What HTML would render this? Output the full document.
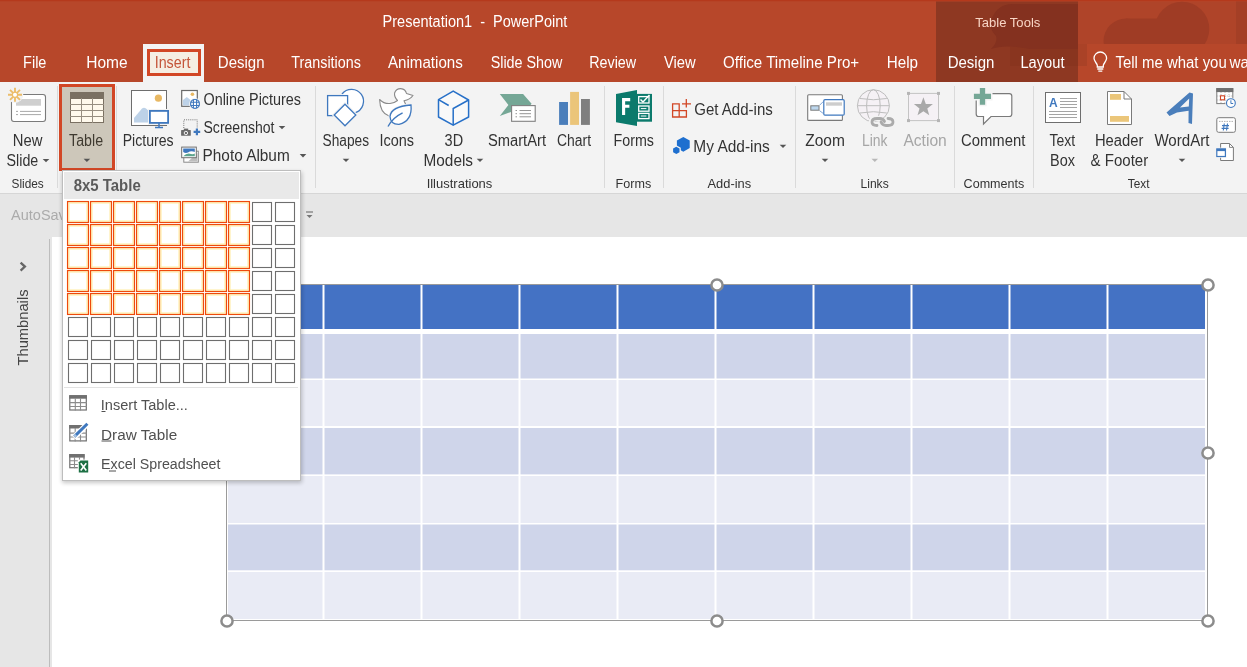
<!DOCTYPE html>
<html><head><meta charset="utf-8"><title>PowerPoint</title>
<style>html,body{margin:0;padding:0;width:1247px;height:667px;overflow:hidden;background:#fff}
svg{display:block;will-change:transform} text{font-family:"Liberation Sans", sans-serif;}</style></head>
<body><svg width="1247" height="667" viewBox="0 0 1247 667">
<rect x="0" y="0" width="1247" height="82" fill="#B7472A"/>
<rect x="0" y="0" width="1247" height="1.2" fill="#B5391C"/>
<rect x="1078" y="1.5" width="169" height="42.5" fill="#AF4429"/>
<g fill="#9F3C25"><circle cx="1182" cy="29" r="27.3"/><circle cx="1126" cy="41" r="22.5"/><rect x="1126" y="18.5" width="40" height="25.5"/></g>
<rect x="1236" y="1.5" width="11" height="42.5" fill="#A43F26"/>
<rect x="936" y="1.5" width="142" height="80.5" fill="#8E3822"/>
<path d="M1010 47 Q1040 43 1078 45 V66 H1010 Z" fill="#89351F"/>
<path d="M1012 4 H1078 V49 H1030 Q1005 44 991 49 Q998 42 996 36 Q988 28 992 18 Q998 4 1012 4 Z" fill="#84311F"/>
<rect x="1078" y="44" width="9" height="22" fill="#AA4227"/>
<rect x="1087" y="44" width="160" height="38" fill="#B7472A"/>
<text x="382.59" y="27" font-size="16" fill="#FFFFFF" font-weight="400" textLength="184.70" lengthAdjust="spacingAndGlyphs" style="white-space:pre">Presentation1  -  PowerPoint</text>
<text x="975.20" y="27" font-size="13.5" fill="#F8D5C5" font-weight="400" textLength="65.16" lengthAdjust="spacingAndGlyphs" >Table Tools</text>
<rect x="143" y="44" width="61" height="38" fill="#F3F3F3"/>
<rect x="148.5" y="50.5" width="51" height="24" fill="#F5EEE3" stroke="#D24726" stroke-width="3"/>
<text x="23.10" y="68" font-size="16" fill="#FFFFFF" font-weight="400" textLength="23.31" lengthAdjust="spacingAndGlyphs" >File</text>
<text x="86.23" y="68" font-size="16" fill="#FFFFFF" font-weight="400" textLength="41.37" lengthAdjust="spacingAndGlyphs" >Home</text>
<text x="154.71" y="68" font-size="16" fill="#C4553A" font-weight="400" textLength="35.70" lengthAdjust="spacingAndGlyphs" >Insert</text>
<text x="217.86" y="68" font-size="16" fill="#FFFFFF" font-weight="400" textLength="46.68" lengthAdjust="spacingAndGlyphs" >Design</text>
<text x="291.30" y="68" font-size="16" fill="#FFFFFF" font-weight="400" textLength="69.60" lengthAdjust="spacingAndGlyphs" >Transitions</text>
<text x="388.00" y="68" font-size="16" fill="#FFFFFF" font-weight="400" textLength="74.80" lengthAdjust="spacingAndGlyphs" >Animations</text>
<text x="490.70" y="68" font-size="16" fill="#FFFFFF" font-weight="400" textLength="71.70" lengthAdjust="spacingAndGlyphs" >Slide Show</text>
<text x="589.20" y="68" font-size="16" fill="#FFFFFF" font-weight="400" textLength="47.00" lengthAdjust="spacingAndGlyphs" >Review</text>
<text x="663.90" y="68" font-size="16" fill="#FFFFFF" font-weight="400" textLength="31.69" lengthAdjust="spacingAndGlyphs" >View</text>
<text x="723.10" y="68" font-size="16" fill="#FFFFFF" font-weight="400" textLength="136.02" lengthAdjust="spacingAndGlyphs" >Office Timeline Pro+</text>
<text x="886.75" y="68" font-size="16" fill="#FFFFFF" font-weight="400" textLength="31.25" lengthAdjust="spacingAndGlyphs" >Help</text>
<text x="947.66" y="68" font-size="16" fill="#FFFFFF" font-weight="400" textLength="46.68" lengthAdjust="spacingAndGlyphs" >Design</text>
<text x="1020.48" y="68" font-size="16" fill="#FFFFFF" font-weight="400" textLength="44.01" lengthAdjust="spacingAndGlyphs" >Layout</text>
<g fill="none" stroke="#FFFFFF" stroke-width="1.3"><path d="M1097.3 67 V65.5 C1097.3 63.5 1094 61.5 1094 58.3 A6.3 6.3 0 0 1 1106.6 58.3 C1106.6 61.5 1103.3 63.5 1103.3 65.5 V67 Z"/><path d="M1097.3 69 H1103.3 M1098.3 71.2 H1102.3"/></g>
<text x="1115.50" y="68" font-size="16" fill="#FFFFFF" font-weight="400" textLength="111.24" lengthAdjust="spacingAndGlyphs" >Tell me what you</text>
<text x="1229.45" y="68" font-size="16" fill="#FFFFFF" font-weight="400" textLength="70.45" lengthAdjust="spacingAndGlyphs" >want to do</text>
<rect x="0" y="82" width="1247" height="111" fill="#F3F3F3"/>
<rect x="0" y="193" width="1247" height="1" fill="#D6D6D6"/>
<rect x="57.0" y="86" width="1" height="102" fill="#DADADA"/>
<rect x="116.0" y="86" width="1" height="102" fill="#DADADA"/>
<rect x="315.0" y="86" width="1" height="102" fill="#DADADA"/>
<rect x="604.0" y="86" width="1" height="102" fill="#DADADA"/>
<rect x="663.0" y="86" width="1" height="102" fill="#DADADA"/>
<rect x="795.0" y="86" width="1" height="102" fill="#DADADA"/>
<rect x="954.0" y="86" width="1" height="102" fill="#DADADA"/>
<rect x="1033.0" y="86" width="1" height="102" fill="#DADADA"/>
<rect x="60.5" y="85.5" width="53" height="84" fill="#CDC7BA" stroke="#D24726" stroke-width="3"/>
<text x="12.87" y="145.8" font-size="16" fill="#333333" font-weight="400" textLength="29.61" lengthAdjust="spacingAndGlyphs" >New</text>
<text x="6.60" y="165.8" font-size="16" fill="#333333" font-weight="400" textLength="31.71" lengthAdjust="spacingAndGlyphs" >Slide</text>
<text x="69.10" y="145.8" font-size="16" fill="#3F3A30" font-weight="400" textLength="34.01" lengthAdjust="spacingAndGlyphs" >Table</text>
<text x="122.72" y="145.8" font-size="16" fill="#333333" font-weight="400" textLength="50.78" lengthAdjust="spacingAndGlyphs" >Pictures</text>
<text x="203.50" y="104.8" font-size="16" fill="#333333" font-weight="400" textLength="97.50" lengthAdjust="spacingAndGlyphs" >Online Pictures</text>
<text x="203.50" y="133.2" font-size="16" fill="#333333" font-weight="400" textLength="71.01" lengthAdjust="spacingAndGlyphs" >Screenshot</text>
<text x="202.55" y="161" font-size="16" fill="#333333" font-weight="400" textLength="87.16" lengthAdjust="spacingAndGlyphs" >Photo Album</text>
<text x="322.50" y="145.8" font-size="16" fill="#333333" font-weight="400" textLength="46.50" lengthAdjust="spacingAndGlyphs" >Shapes</text>
<text x="379.50" y="145.8" font-size="16" fill="#333333" font-weight="400" textLength="34.50" lengthAdjust="spacingAndGlyphs" >Icons</text>
<text x="444.60" y="145.8" font-size="16" fill="#333333" font-weight="400" textLength="18.50" lengthAdjust="spacingAndGlyphs" >3D</text>
<text x="423.54" y="165.8" font-size="16" fill="#333333" font-weight="400" textLength="49.46" lengthAdjust="spacingAndGlyphs" >Models</text>
<text x="488.00" y="145.8" font-size="16" fill="#333333" font-weight="400" textLength="57.99" lengthAdjust="spacingAndGlyphs" >SmartArt</text>
<text x="557.00" y="145.8" font-size="16" fill="#333333" font-weight="400" textLength="34.02" lengthAdjust="spacingAndGlyphs" >Chart</text>
<text x="613.61" y="145.8" font-size="16" fill="#333333" font-weight="400" textLength="40.39" lengthAdjust="spacingAndGlyphs" >Forms</text>
<text x="694.30" y="114.8" font-size="16" fill="#333333" font-weight="400" textLength="78.50" lengthAdjust="spacingAndGlyphs" >Get Add-ins</text>
<text x="693.34" y="152" font-size="16" fill="#333333" font-weight="400" textLength="76.46" lengthAdjust="spacingAndGlyphs" >My Add-ins</text>
<text x="805.20" y="145.8" font-size="16" fill="#333333" font-weight="400" textLength="39.62" lengthAdjust="spacingAndGlyphs" >Zoom</text>
<text x="861.93" y="145.8" font-size="16" fill="#A6A6A6" font-weight="400" textLength="25.50" lengthAdjust="spacingAndGlyphs" >Link</text>
<text x="903.40" y="145.8" font-size="16" fill="#A6A6A6" font-weight="400" textLength="43.38" lengthAdjust="spacingAndGlyphs" >Action</text>
<text x="961.00" y="145.8" font-size="16" fill="#333333" font-weight="400" textLength="64.29" lengthAdjust="spacingAndGlyphs" >Comment</text>
<text x="1049.50" y="145.8" font-size="16" fill="#333333" font-weight="400" textLength="25.62" lengthAdjust="spacingAndGlyphs" >Text</text>
<text x="1050.00" y="165.8" font-size="16" fill="#333333" font-weight="400" textLength="24.90" lengthAdjust="spacingAndGlyphs" >Box</text>
<text x="1094.88" y="145.8" font-size="16" fill="#333333" font-weight="400" textLength="48.50" lengthAdjust="spacingAndGlyphs" >Header</text>
<text x="1090.60" y="165.8" font-size="16" fill="#333333" font-weight="400" textLength="57.57" lengthAdjust="spacingAndGlyphs" >&amp; Footer</text>
<text x="1154.40" y="145.8" font-size="16" fill="#333333" font-weight="400" textLength="55.08" lengthAdjust="spacingAndGlyphs" >WordArt</text>
<text x="11.50" y="187.7" font-size="13.5" fill="#333333" font-weight="400" textLength="32.28" lengthAdjust="spacingAndGlyphs" >Slides</text>
<text x="426.64" y="187.7" font-size="13.5" fill="#333333" font-weight="400" textLength="65.72" lengthAdjust="spacingAndGlyphs" >Illustrations</text>
<text x="615.57" y="187.7" font-size="13.5" fill="#333333" font-weight="400" textLength="35.60" lengthAdjust="spacingAndGlyphs" >Forms</text>
<text x="707.50" y="187.7" font-size="13.5" fill="#333333" font-weight="400" textLength="43.66" lengthAdjust="spacingAndGlyphs" >Add-ins</text>
<text x="860.51" y="187.7" font-size="13.5" fill="#333333" font-weight="400" textLength="28.17" lengthAdjust="spacingAndGlyphs" >Links</text>
<text x="963.60" y="187.7" font-size="13.5" fill="#333333" font-weight="400" textLength="60.67" lengthAdjust="spacingAndGlyphs" >Comments</text>
<text x="1127.80" y="187.7" font-size="13.5" fill="#333333" font-weight="400" textLength="21.68" lengthAdjust="spacingAndGlyphs" >Text</text>
<path d="M42.70 158.9 h6.6 l-3.3 3.3 z" fill="#555555"/>
<path d="M83.60 158.8 h6.6 l-3.3 3.3 z" fill="#555555"/>
<path d="M278.70 125.9 h6.6 l-3.3 3.3 z" fill="#555555"/>
<path d="M299.70 154.1 h6.6 l-3.3 3.3 z" fill="#555555"/>
<path d="M342.70 158.8 h6.6 l-3.3 3.3 z" fill="#555555"/>
<path d="M476.70 158.8 h6.6 l-3.3 3.3 z" fill="#555555"/>
<path d="M779.70 144.8 h6.6 l-3.3 3.3 z" fill="#555555"/>
<path d="M821.70 158.8 h6.6 l-3.3 3.3 z" fill="#555555"/>
<path d="M1178.70 158.8 h6.6 l-3.3 3.3 z" fill="#555555"/>
<path d="M871.50 158.8 h6.6 l-3.3 3.3 z" fill="#B8B8B8"/>
<rect x="11.5" y="94.5" width="34" height="27" rx="2.5" fill="#FFFFFF" stroke="#7A7A7A" stroke-width="1.1"/>
<rect x="16" y="99" width="25" height="6.7" fill="#CFCFCF"/>
<path d="M16 111.4 H18 M20 111.4 H41 M16 114.6 H18 M20 114.6 H41" stroke="#A8A8A8" stroke-width="1"/>
<circle cx="15" cy="94.8" r="8.2" fill="#F3F3F3"/>
<g stroke="#ECBD6A" stroke-width="1.9"><path d="M15 87.8 V101.8 M8 94.8 H22 M10 89.8 L20 99.8 M20 89.8 L10 99.8"/></g><circle cx="15" cy="94.8" r="2.6" fill="#FFFFFF" stroke="#ECBD6A" stroke-width="1.2"/>
<rect x="70" y="92" width="34" height="31" fill="#7A7062"/>
<g fill="#FFF9EC"><rect x="71" y="99" width="10" height="5"/><rect x="82" y="99" width="10" height="5"/><rect x="93" y="99" width="10" height="5"/><rect x="71" y="105" width="10" height="5"/><rect x="82" y="105" width="10" height="5"/><rect x="93" y="105" width="10" height="5"/><rect x="71" y="111" width="10" height="5"/><rect x="82" y="111" width="10" height="5"/><rect x="93" y="111" width="10" height="5"/><rect x="71" y="117" width="10" height="5"/><rect x="82" y="117" width="10" height="5"/><rect x="93" y="117" width="10" height="5"/></g>
<path d="M70 104.5 H104 M70 110.5 H104 M70 116.5 H104 M81.5 98 V123 M92.5 98 V123" stroke="#978E80" stroke-width="1"/>
<rect x="131.5" y="90.5" width="35" height="35" fill="#FFFFFF" stroke="#6E6E6E"/>
<circle cx="158.4" cy="98.2" r="3.6" fill="#E8B863"/>
<path d="M134 122.6 V118 L142 108.5 Q144 107 146 108.5 L150 112 V122.6 Z" fill="#BDD2E8"/>
<rect x="148" y="109" width="22" height="16" fill="#F3F3F3"/>
<rect x="149.9" y="110.9" width="18.2" height="12" fill="#FFFFFF" stroke="#3F78BE" stroke-width="1.8"/>
<path d="M159 123 V127 M155 127.6 H163" stroke="#3F78BE" stroke-width="1.5"/>
<rect x="181.7" y="90.5" width="15.6" height="15.8" fill="#FFFFFF" stroke="#6A6A6A" stroke-width="1.2"/>
<path d="M183 105.5 V100 L186.8 96.9 L190.5 100 V105.5 Z" fill="#BDD2E8"/><circle cx="192.4" cy="94.2" r="1.8" fill="#E8B863"/>
<circle cx="195" cy="103.9" r="5.9" fill="#F3F3F3"/>
<circle cx="195" cy="103.9" r="4.4" fill="#FFFFFF" stroke="#3F78BE" stroke-width="1.2"/><path d="M193.4 99.6 V108.2 M196.6 99.6 V108.2 M190.7 102.3 H199.3 M190.7 105.5 H199.3" stroke="#3F78BE" stroke-width="1.1"/>
<path d="M183.8 128 V119.8 H197.2 V128" fill="none" stroke="#777777" stroke-width="1" stroke-dasharray="1 1.1"/>
<rect x="181.1" y="130" width="9.7" height="5.8" rx="0.6" fill="#6A6A6A"/><rect x="183.8" y="128.6" width="4.4" height="2" fill="#6A6A6A"/><circle cx="185.9" cy="133" r="1.7" fill="none" stroke="#FFFFFF" stroke-width="0.9"/>
<path d="M196.9 128.6 V135.2 M193.6 131.9 H200.2" stroke="#3F78BE" stroke-width="2.2"/>
<rect x="183.8" y="151.2" width="14.5" height="11" fill="#FFFFFF" stroke="#8A8A8A"/>
<path d="M188 161.5 L197.5 153 V161.5 Z" fill="#BDBDBD"/>
<rect x="181.7" y="147.1" width="14.6" height="10.6" fill="#FFFFFF" stroke="#6E6E6E"/>
<path d="M183.2 148.6 H194.8 V152 Q191 150.5 188 152.5 Q185.5 153.5 183.2 152 Z" fill="#3F78BE"/><path d="M183.2 156.2 Q187 152.5 191 154 Q193 154.5 194.8 153.5 V156.2 Z" fill="#5DA58E"/>
<path d="M342 94 A12 12 0 1 1 355 112.8" fill="#FFFFFF" stroke="#3F78BE" stroke-width="1.3"/>
<path d="M342 94 A12 12 0 0 0 355 112.8 L349 100 Z" fill="#FFFFFF"/>
<rect x="327.6" y="95.6" width="20" height="20" fill="#FFFFFF" stroke="#3F78BE" stroke-width="1.3"/>
<path d="M345 104.2 L355.8 115 L345 125.8 L334.2 115 Z" fill="#F3F3F3" stroke="#F3F3F3" stroke-width="3.5"/>
<path d="M345 104.2 L355.8 115 L345 125.8 L334.2 115 Z" fill="#FFFFFF" stroke="#3F78BE" stroke-width="1.3"/>
<path d="M379.6 99.5 Q384 104 390 103.5 Q394.5 103 397.5 100.5 Q394 97 394.6 93 Q396 88.5 400.8 88.6 Q405.5 89 406.5 93.5 L413 95.5 Q410 99.5 404 100.8 L405.5 104 L404 110 Q398 118 389 116 Q380 113 379.6 99.5 Z" fill="#FFFFFF" stroke="#8A8A8A" stroke-width="1.1" stroke-linejoin="round"/>
<path d="M411 105 Q412.5 121 399 124.3 Q390.5 124.5 390 116.5 Q391 106.5 411 105 Z" fill="#FFFFFF" stroke="#F3F3F3" stroke-width="3"/>
<path d="M411 105 Q412.5 121 399 124.3 Q390.5 124.5 390 116.5 Q391 106.5 411 105 Z" fill="#FFFFFF" stroke="#3F78BE" stroke-width="1.3"/>
<path d="M388 126.5 Q393 117.5 402.6 112.9" fill="none" stroke="#3F78BE" stroke-width="1.4"/>
<path d="M453.2 91.1 L468.6 100 V117 L453.2 125.2 L438.5 117 V99.7 Z" fill="#F9F9F9" stroke="#2770C8" stroke-width="1.5" stroke-linejoin="round"/>
<path d="M468.6 100 L453.2 108.5 V125.2 M438.5 99.7 L448.7 105.5" fill="none" stroke="#2770C8" stroke-width="1.5"/>
<path d="M499.8 94 H523.1 L531.6 103.8 L528 108 H511 V112 L499.8 116 L508.4 105.1 Z" fill="#75A796"/>
<rect x="511.6" y="105.6" width="23.6" height="15.7" fill="#FFFFFF" stroke="#808080" stroke-width="1.1"/>
<path d="M515.5 110.5 H517 M519.5 110.5 H531 M515.5 113.7 H517 M519.5 113.7 H531 M515.5 116.8 H517 M519.5 116.8 H531" stroke="#8A8A8A" stroke-width="0.9"/>
<rect x="559.1" y="102" width="8.9" height="22.9" fill="#4A7EBB"/><rect x="570.1" y="91.9" width="8.9" height="33" fill="#EBC57A"/><rect x="581" y="99" width="8.9" height="25.9" fill="#7F7F7F"/>
<path d="M616 93.9 L637 90 V125.9 L616 122.2 Z" fill="#0B7A6C"/>
<rect x="637" y="93.9" width="15" height="27.8" fill="#0B7A6C"/>
<g fill="none" stroke="#FFFFFF" stroke-width="1.3"><rect x="638.7" y="96.6" width="10.3" height="6.4"/><rect x="638.7" y="106" width="10.3" height="5.2"/><rect x="638.7" y="113.4" width="10.3" height="5.2"/></g>
<path d="M640.8 108.6 H646.4 M640.8 116 H646.4" stroke="#FFFFFF" stroke-width="1"/>
<path d="M640.5 99.5 L643 102 L649.5 95" fill="none" stroke="#FFFFFF" stroke-width="1.5"/>
<path d="M623.6 114.9 V99.6 H630.2 M623.6 106.2 H629.4" fill="none" stroke="#FFFFFF" stroke-width="3.1"/>
<path d="M672.6 103.9 H679.2 V117 H672.6 Z M672.6 110.7 H686.4 V117 H679.2" fill="none" stroke="#D24726" stroke-width="1.3"/>
<path d="M686.3 99.1 V107.5 M682 103.8 H691" stroke="#D24726" stroke-width="1.3"/>
<path d="M683.30 136.90 L689.71 140.60 L689.71 148.00 L683.30 151.70 L676.89 148.00 L676.89 140.60 Z" fill="#1E6FCF"/>
<path d="M676.30 145.20 L680.80 147.80 L680.80 153.00 L676.30 155.60 L671.80 153.00 L671.80 147.80 Z" fill="#F3F3F3"/>
<path d="M676.30 146.70 L679.50 148.55 L679.50 152.25 L676.30 154.10 L673.10 152.25 L673.10 148.55 Z" fill="#1E6FCF"/>
<rect x="807.7" y="94.8" width="34.7" height="25.6" rx="1" fill="#FFFFFF" stroke="#7A7A7A" stroke-width="1.1"/>
<path d="M819.5 105.3 L823.3 101.5 M819.5 110.6 L823.3 113.5" stroke="#7FA6D6" stroke-width="1"/>
<rect x="823.8" y="99.6" width="20.4" height="15.6" rx="1.2" fill="#FFFFFF" stroke="#3F78BE" stroke-width="1.2"/>
<rect x="826" y="102.3" width="16" height="3.4" fill="#CDCDCD"/>
<rect x="810.8" y="105.8" width="8.2" height="4.4" fill="#BDD7EE" stroke="#7A7A7A" stroke-width="1"/>
<circle cx="873.4" cy="105.7" r="16" fill="#F5F1F5" stroke="#BDBDBD" stroke-width="1"/>
<g fill="none" stroke="#BDBDBD" stroke-width="1"><ellipse cx="873.4" cy="105.7" rx="6.8" ry="16"/><path d="M857.4 105.7 H889.4 M860 98.5 Q873.4 101 886.8 98.5 M860 113 Q873.4 110.4 886.8 113"/></g>
<g fill="none" stroke="#F3F3F3" stroke-width="5.5"><path d="M876 125 Q871.5 125 871.5 121.5 Q871.5 118.5 876 118.5 H880 M885 125 H889 Q893.5 125 893.5 121.5 Q893.5 118 889 118"/></g>
<g fill="none" stroke="#ABABAB" stroke-width="2.8" stroke-linecap="round"><path d="M877 125.5 Q872 125.5 872 122 Q872 118.5 877 118.5 H880 Q883 118.5 884.5 121.5 M881 122 Q882.5 125.5 886 125.5 H888 Q893 125.5 893 122 Q893 118.5 888 118.5"/></g>
<rect x="908.5" y="93.4" width="30" height="27.2" fill="#F5F1F5" stroke="#C4C4C4" stroke-width="1"/>
<g fill="#B5B5B5"><rect x="907" y="91.9" width="3" height="3"/><rect x="937" y="91.9" width="3" height="3"/><rect x="907" y="119.1" width="3" height="3"/><rect x="937" y="119.1" width="3" height="3"/></g>
<path d="M923.40 97.20 L925.81 103.88 L932.91 104.11 L927.30 108.47 L929.28 115.29 L923.40 111.30 L917.52 115.29 L919.50 108.47 L913.89 104.11 L920.99 103.88 Z" fill="#A9A9A9"/>
<path d="M980 93.6 H1009.3 Q1011.8 93.6 1011.8 96.1 V114 Q1011.8 116.5 1009.3 116.5 H991 L983.5 124 V116.5 H978.5 Q976.2 116.5 976.2 114 V98" fill="#FFFFFF" stroke="#7A7A7A" stroke-width="1.2"/>
<path d="M982.5 86.5 V106.2 M972.4 96.3 H992.5" stroke="#F3F3F3" stroke-width="8.3"/>
<path d="M982.5 88 V104.7 M973.9 96.3 H991" stroke="#75A796" stroke-width="5.3"/>
<rect x="1045.5" y="92.5" width="35" height="30" fill="#FFFFFF" stroke="#6E6E6E"/>
<text x="1049" y="107" font-size="12" font-weight="700" fill="#3F78BE">A</text>
<path d="M1060 98.5 H1077 M1060 101.5 H1077 M1060 104.5 H1077 M1060 107.5 H1077 M1049 111.5 H1077 M1049 114.5 H1077 M1049 117.5 H1077" stroke="#9A9A9A" stroke-width="0.9"/>
<path d="M1107.5 91.5 H1124 L1131.5 99 V124.5 H1107.5 Z" fill="#FFFFFF" stroke="#7A7A7A"/><path d="M1124 91.5 V99 H1131.5" fill="none" stroke="#7A7A7A"/>
<rect x="1110" y="94" width="11" height="5.8" fill="#EBC67A"/><rect x="1110" y="116" width="19" height="5.8" fill="#EBC67A"/>
<path d="M1166.5 112.5 L1189.5 92.5 L1193 93.5 L1192 124 L1188.5 123 L1188.6 110.8 L1177 112.5 L1169.5 116 Z M1180 107.5 L1188.8 106.5 L1189.2 98.5 Z" fill="#4A7EBB" fill-rule="evenodd"/>
<rect x="1216.8" y="88.6" width="16" height="15" fill="#FFFFFF" stroke="#7A7A7A" stroke-width="1"/><rect x="1216.3" y="88.1" width="17" height="4" fill="#6E6E6E"/>
<path d="M1216.8 96 H1232.8 M1216.8 100 H1227 M1221 92 V103.5 M1225 92 V103.5 M1229 92 V98" stroke="#A0A0A0" stroke-width="0.7" stroke-dasharray="1 1"/>
<rect x="1220.5" y="95.8" width="4" height="4" fill="#FFFFFF" stroke="#D24726" stroke-width="1.1"/>
<circle cx="1230.9" cy="103.1" r="5.6" fill="#F3F3F3"/><circle cx="1230.9" cy="103.1" r="4.4" fill="#FFFFFF" stroke="#3F78BE" stroke-width="1.1"/><path d="M1230.9 100.3 V103.5 H1233.2" fill="none" stroke="#3F78BE" stroke-width="1"/>
<rect x="1216.8" y="117.7" width="18.6" height="14.6" rx="1.8" fill="#FFFFFF" stroke="#7A7A7A" stroke-width="1"/><path d="M1219 121.4 H1233" stroke="#9A9A9A" stroke-width="0.8" stroke-dasharray="1.5 1"/>
<path d="M1224.3 123.5 L1223.3 130.5 M1227.5 123.5 L1226.5 130.5 M1222 125.6 H1229 M1221.6 128.4 H1228.6" stroke="#3F78BE" stroke-width="1.1"/>
<path d="M1220.6 143.5 H1229.5 L1233.4 147.4 V160.5 H1220.6 Z" fill="#FFFFFF" stroke="#7A7A7A" stroke-width="1"/><path d="M1229.5 143.5 V147.4 H1233.4" fill="none" stroke="#7A7A7A" stroke-width="0.9"/>
<rect x="1215.5" y="147.6" width="11" height="10.2" fill="#F3F3F3"/><rect x="1216.8" y="148.9" width="8.6" height="7.6" fill="#FFFFFF" stroke="#3F78BE" stroke-width="1.2"/><rect x="1216.8" y="148.9" width="8.6" height="2.2" fill="#3F78BE"/>
<rect x="0" y="194" width="1247" height="43" fill="#E6E6E6"/>
<text x="11.10" y="219.7" font-size="15.5" fill="#ABABAB" font-weight="400" textLength="62.81" lengthAdjust="spacingAndGlyphs" >AutoSave</text>
<path d="M306 212 H313" stroke="#777" stroke-width="1.2"/><path d="M306.5 215 h6 l-3 3 z" fill="#777"/>
<rect x="0" y="237" width="52" height="430" fill="#E6E6E6"/>
<rect x="49" y="239" width="1" height="428" fill="#BDBDBD"/>
<rect x="52" y="237" width="1195" height="430" fill="#FFFFFF"/>
<path d="M20.6 262.6 L24.9 266.6 L20.6 270.6" fill="none" stroke="#666666" stroke-width="2.3"/>
<text x="0" y="0" font-size="15.5" fill="#444444" transform="translate(28.3 365.5) rotate(-90)" textLength="76" lengthAdjust="spacingAndGlyphs">Thumbnails</text>
<rect x="227" y="284" width="981" height="337" fill="#FFFFFF"/>
<rect x="228" y="285" width="94.5" height="44" fill="#4472C4"/>
<rect x="324.5" y="285" width="96.0" height="44" fill="#4472C4"/>
<rect x="422.5" y="285" width="96.0" height="44" fill="#4472C4"/>
<rect x="520.5" y="285" width="96.0" height="44" fill="#4472C4"/>
<rect x="618.5" y="285" width="96.0" height="44" fill="#4472C4"/>
<rect x="716.5" y="285" width="96.0" height="44" fill="#4472C4"/>
<rect x="814.5" y="285" width="96.0" height="44" fill="#4472C4"/>
<rect x="912.5" y="285" width="96.0" height="44" fill="#4472C4"/>
<rect x="1010.5" y="285" width="96.0" height="44" fill="#4472C4"/>
<rect x="1108.5" y="285" width="96.5" height="44" fill="#4472C4"/>
<rect x="228" y="334" width="94.5" height="44.5" fill="#CFD5EA"/>
<rect x="324.5" y="334" width="96.0" height="44.5" fill="#CFD5EA"/>
<rect x="422.5" y="334" width="96.0" height="44.5" fill="#CFD5EA"/>
<rect x="520.5" y="334" width="96.0" height="44.5" fill="#CFD5EA"/>
<rect x="618.5" y="334" width="96.0" height="44.5" fill="#CFD5EA"/>
<rect x="716.5" y="334" width="96.0" height="44.5" fill="#CFD5EA"/>
<rect x="814.5" y="334" width="96.0" height="44.5" fill="#CFD5EA"/>
<rect x="912.5" y="334" width="96.0" height="44.5" fill="#CFD5EA"/>
<rect x="1010.5" y="334" width="96.0" height="44.5" fill="#CFD5EA"/>
<rect x="1108.5" y="334" width="96.5" height="44.5" fill="#CFD5EA"/>
<rect x="228" y="380" width="94.5" height="46" fill="#E9EBF5"/>
<rect x="324.5" y="380" width="96.0" height="46" fill="#E9EBF5"/>
<rect x="422.5" y="380" width="96.0" height="46" fill="#E9EBF5"/>
<rect x="520.5" y="380" width="96.0" height="46" fill="#E9EBF5"/>
<rect x="618.5" y="380" width="96.0" height="46" fill="#E9EBF5"/>
<rect x="716.5" y="380" width="96.0" height="46" fill="#E9EBF5"/>
<rect x="814.5" y="380" width="96.0" height="46" fill="#E9EBF5"/>
<rect x="912.5" y="380" width="96.0" height="46" fill="#E9EBF5"/>
<rect x="1010.5" y="380" width="96.0" height="46" fill="#E9EBF5"/>
<rect x="1108.5" y="380" width="96.5" height="46" fill="#E9EBF5"/>
<rect x="228" y="428" width="94.5" height="46.39999999999998" fill="#CFD5EA"/>
<rect x="324.5" y="428" width="96.0" height="46.39999999999998" fill="#CFD5EA"/>
<rect x="422.5" y="428" width="96.0" height="46.39999999999998" fill="#CFD5EA"/>
<rect x="520.5" y="428" width="96.0" height="46.39999999999998" fill="#CFD5EA"/>
<rect x="618.5" y="428" width="96.0" height="46.39999999999998" fill="#CFD5EA"/>
<rect x="716.5" y="428" width="96.0" height="46.39999999999998" fill="#CFD5EA"/>
<rect x="814.5" y="428" width="96.0" height="46.39999999999998" fill="#CFD5EA"/>
<rect x="912.5" y="428" width="96.0" height="46.39999999999998" fill="#CFD5EA"/>
<rect x="1010.5" y="428" width="96.0" height="46.39999999999998" fill="#CFD5EA"/>
<rect x="1108.5" y="428" width="96.5" height="46.39999999999998" fill="#CFD5EA"/>
<rect x="228" y="476" width="94.5" height="47" fill="#E9EBF5"/>
<rect x="324.5" y="476" width="96.0" height="47" fill="#E9EBF5"/>
<rect x="422.5" y="476" width="96.0" height="47" fill="#E9EBF5"/>
<rect x="520.5" y="476" width="96.0" height="47" fill="#E9EBF5"/>
<rect x="618.5" y="476" width="96.0" height="47" fill="#E9EBF5"/>
<rect x="716.5" y="476" width="96.0" height="47" fill="#E9EBF5"/>
<rect x="814.5" y="476" width="96.0" height="47" fill="#E9EBF5"/>
<rect x="912.5" y="476" width="96.0" height="47" fill="#E9EBF5"/>
<rect x="1010.5" y="476" width="96.0" height="47" fill="#E9EBF5"/>
<rect x="1108.5" y="476" width="96.5" height="47" fill="#E9EBF5"/>
<rect x="228" y="524.5" width="94.5" height="45.799999999999955" fill="#CFD5EA"/>
<rect x="324.5" y="524.5" width="96.0" height="45.799999999999955" fill="#CFD5EA"/>
<rect x="422.5" y="524.5" width="96.0" height="45.799999999999955" fill="#CFD5EA"/>
<rect x="520.5" y="524.5" width="96.0" height="45.799999999999955" fill="#CFD5EA"/>
<rect x="618.5" y="524.5" width="96.0" height="45.799999999999955" fill="#CFD5EA"/>
<rect x="716.5" y="524.5" width="96.0" height="45.799999999999955" fill="#CFD5EA"/>
<rect x="814.5" y="524.5" width="96.0" height="45.799999999999955" fill="#CFD5EA"/>
<rect x="912.5" y="524.5" width="96.0" height="45.799999999999955" fill="#CFD5EA"/>
<rect x="1010.5" y="524.5" width="96.0" height="45.799999999999955" fill="#CFD5EA"/>
<rect x="1108.5" y="524.5" width="96.5" height="45.799999999999955" fill="#CFD5EA"/>
<rect x="228" y="572" width="94.5" height="47" fill="#E9EBF5"/>
<rect x="324.5" y="572" width="96.0" height="47" fill="#E9EBF5"/>
<rect x="422.5" y="572" width="96.0" height="47" fill="#E9EBF5"/>
<rect x="520.5" y="572" width="96.0" height="47" fill="#E9EBF5"/>
<rect x="618.5" y="572" width="96.0" height="47" fill="#E9EBF5"/>
<rect x="716.5" y="572" width="96.0" height="47" fill="#E9EBF5"/>
<rect x="814.5" y="572" width="96.0" height="47" fill="#E9EBF5"/>
<rect x="912.5" y="572" width="96.0" height="47" fill="#E9EBF5"/>
<rect x="1010.5" y="572" width="96.0" height="47" fill="#E9EBF5"/>
<rect x="1108.5" y="572" width="96.5" height="47" fill="#E9EBF5"/>
<rect x="226.5" y="284.5" width="981" height="336" fill="none" stroke="#9A9A9A" stroke-width="1"/>
<circle cx="227" cy="285" r="5.6" fill="#FFFFFF" stroke="#8C8C8C" stroke-width="2.5"/>
<circle cx="717" cy="285" r="5.6" fill="#FFFFFF" stroke="#8C8C8C" stroke-width="2.5"/>
<circle cx="1208" cy="285" r="5.6" fill="#FFFFFF" stroke="#8C8C8C" stroke-width="2.5"/>
<circle cx="227" cy="453" r="5.6" fill="#FFFFFF" stroke="#8C8C8C" stroke-width="2.5"/>
<circle cx="1208" cy="453" r="5.6" fill="#FFFFFF" stroke="#8C8C8C" stroke-width="2.5"/>
<circle cx="227" cy="621" r="5.6" fill="#FFFFFF" stroke="#8C8C8C" stroke-width="2.5"/>
<circle cx="717" cy="621" r="5.6" fill="#FFFFFF" stroke="#8C8C8C" stroke-width="2.5"/>
<circle cx="1208" cy="621" r="5.6" fill="#FFFFFF" stroke="#8C8C8C" stroke-width="2.5"/>
<defs><filter id="sh" x="-10%" y="-10%" width="120%" height="120%"><feGaussianBlur stdDeviation="2.2"/></filter></defs>
<rect x="62" y="172" width="240" height="311" fill="#000" opacity="0.22" filter="url(#sh)"/>
<rect x="62.5" y="170.5" width="238" height="310" fill="#FFFFFF" stroke="#BDBDBD"/>
<rect x="64" y="172" width="235" height="27" fill="#E9E9E9"/>
<text x="73.70" y="191.1" font-size="16" fill="#5A5A5A" font-weight="700" textLength="67.01" lengthAdjust="spacingAndGlyphs" >8x5 Table</text>
<rect x="67.6" y="201.6" width="20.8" height="20.8" fill="#FFFFFF" stroke="#EE4A0C" stroke-width="1.3"/><rect x="68.95" y="202.95" width="18.1" height="18.1" fill="none" stroke="#FFEA9C" stroke-width="1.1"/><rect x="90.6" y="201.6" width="20.8" height="20.8" fill="#FFFFFF" stroke="#EE4A0C" stroke-width="1.3"/><rect x="91.95" y="202.95" width="18.1" height="18.1" fill="none" stroke="#FFEA9C" stroke-width="1.1"/><rect x="113.6" y="201.6" width="20.8" height="20.8" fill="#FFFFFF" stroke="#EE4A0C" stroke-width="1.3"/><rect x="114.95" y="202.95" width="18.1" height="18.1" fill="none" stroke="#FFEA9C" stroke-width="1.1"/><rect x="136.6" y="201.6" width="20.8" height="20.8" fill="#FFFFFF" stroke="#EE4A0C" stroke-width="1.3"/><rect x="137.95" y="202.95" width="18.1" height="18.1" fill="none" stroke="#FFEA9C" stroke-width="1.1"/><rect x="159.6" y="201.6" width="20.8" height="20.8" fill="#FFFFFF" stroke="#EE4A0C" stroke-width="1.3"/><rect x="160.95" y="202.95" width="18.1" height="18.1" fill="none" stroke="#FFEA9C" stroke-width="1.1"/><rect x="182.6" y="201.6" width="20.8" height="20.8" fill="#FFFFFF" stroke="#EE4A0C" stroke-width="1.3"/><rect x="183.95" y="202.95" width="18.1" height="18.1" fill="none" stroke="#FFEA9C" stroke-width="1.1"/><rect x="205.6" y="201.6" width="20.8" height="20.8" fill="#FFFFFF" stroke="#EE4A0C" stroke-width="1.3"/><rect x="206.95" y="202.95" width="18.1" height="18.1" fill="none" stroke="#FFEA9C" stroke-width="1.1"/><rect x="228.6" y="201.6" width="20.8" height="20.8" fill="#FFFFFF" stroke="#EE4A0C" stroke-width="1.3"/><rect x="229.95" y="202.95" width="18.1" height="18.1" fill="none" stroke="#FFEA9C" stroke-width="1.1"/><rect x="252.5" y="202.5" width="19" height="19" fill="#FFFFFF" stroke="#6E6E6E" stroke-width="1.1"/><rect x="275.5" y="202.5" width="19" height="19" fill="#FFFFFF" stroke="#6E6E6E" stroke-width="1.1"/><rect x="67.6" y="224.6" width="20.8" height="20.8" fill="#FFFFFF" stroke="#EE4A0C" stroke-width="1.3"/><rect x="68.95" y="225.95" width="18.1" height="18.1" fill="none" stroke="#FFEA9C" stroke-width="1.1"/><rect x="90.6" y="224.6" width="20.8" height="20.8" fill="#FFFFFF" stroke="#EE4A0C" stroke-width="1.3"/><rect x="91.95" y="225.95" width="18.1" height="18.1" fill="none" stroke="#FFEA9C" stroke-width="1.1"/><rect x="113.6" y="224.6" width="20.8" height="20.8" fill="#FFFFFF" stroke="#EE4A0C" stroke-width="1.3"/><rect x="114.95" y="225.95" width="18.1" height="18.1" fill="none" stroke="#FFEA9C" stroke-width="1.1"/><rect x="136.6" y="224.6" width="20.8" height="20.8" fill="#FFFFFF" stroke="#EE4A0C" stroke-width="1.3"/><rect x="137.95" y="225.95" width="18.1" height="18.1" fill="none" stroke="#FFEA9C" stroke-width="1.1"/><rect x="159.6" y="224.6" width="20.8" height="20.8" fill="#FFFFFF" stroke="#EE4A0C" stroke-width="1.3"/><rect x="160.95" y="225.95" width="18.1" height="18.1" fill="none" stroke="#FFEA9C" stroke-width="1.1"/><rect x="182.6" y="224.6" width="20.8" height="20.8" fill="#FFFFFF" stroke="#EE4A0C" stroke-width="1.3"/><rect x="183.95" y="225.95" width="18.1" height="18.1" fill="none" stroke="#FFEA9C" stroke-width="1.1"/><rect x="205.6" y="224.6" width="20.8" height="20.8" fill="#FFFFFF" stroke="#EE4A0C" stroke-width="1.3"/><rect x="206.95" y="225.95" width="18.1" height="18.1" fill="none" stroke="#FFEA9C" stroke-width="1.1"/><rect x="228.6" y="224.6" width="20.8" height="20.8" fill="#FFFFFF" stroke="#EE4A0C" stroke-width="1.3"/><rect x="229.95" y="225.95" width="18.1" height="18.1" fill="none" stroke="#FFEA9C" stroke-width="1.1"/><rect x="252.5" y="225.5" width="19" height="19" fill="#FFFFFF" stroke="#6E6E6E" stroke-width="1.1"/><rect x="275.5" y="225.5" width="19" height="19" fill="#FFFFFF" stroke="#6E6E6E" stroke-width="1.1"/><rect x="67.6" y="247.6" width="20.8" height="20.8" fill="#FFFFFF" stroke="#EE4A0C" stroke-width="1.3"/><rect x="68.95" y="248.95" width="18.1" height="18.1" fill="none" stroke="#FFEA9C" stroke-width="1.1"/><rect x="90.6" y="247.6" width="20.8" height="20.8" fill="#FFFFFF" stroke="#EE4A0C" stroke-width="1.3"/><rect x="91.95" y="248.95" width="18.1" height="18.1" fill="none" stroke="#FFEA9C" stroke-width="1.1"/><rect x="113.6" y="247.6" width="20.8" height="20.8" fill="#FFFFFF" stroke="#EE4A0C" stroke-width="1.3"/><rect x="114.95" y="248.95" width="18.1" height="18.1" fill="none" stroke="#FFEA9C" stroke-width="1.1"/><rect x="136.6" y="247.6" width="20.8" height="20.8" fill="#FFFFFF" stroke="#EE4A0C" stroke-width="1.3"/><rect x="137.95" y="248.95" width="18.1" height="18.1" fill="none" stroke="#FFEA9C" stroke-width="1.1"/><rect x="159.6" y="247.6" width="20.8" height="20.8" fill="#FFFFFF" stroke="#EE4A0C" stroke-width="1.3"/><rect x="160.95" y="248.95" width="18.1" height="18.1" fill="none" stroke="#FFEA9C" stroke-width="1.1"/><rect x="182.6" y="247.6" width="20.8" height="20.8" fill="#FFFFFF" stroke="#EE4A0C" stroke-width="1.3"/><rect x="183.95" y="248.95" width="18.1" height="18.1" fill="none" stroke="#FFEA9C" stroke-width="1.1"/><rect x="205.6" y="247.6" width="20.8" height="20.8" fill="#FFFFFF" stroke="#EE4A0C" stroke-width="1.3"/><rect x="206.95" y="248.95" width="18.1" height="18.1" fill="none" stroke="#FFEA9C" stroke-width="1.1"/><rect x="228.6" y="247.6" width="20.8" height="20.8" fill="#FFFFFF" stroke="#EE4A0C" stroke-width="1.3"/><rect x="229.95" y="248.95" width="18.1" height="18.1" fill="none" stroke="#FFEA9C" stroke-width="1.1"/><rect x="252.5" y="248.5" width="19" height="19" fill="#FFFFFF" stroke="#6E6E6E" stroke-width="1.1"/><rect x="275.5" y="248.5" width="19" height="19" fill="#FFFFFF" stroke="#6E6E6E" stroke-width="1.1"/><rect x="67.6" y="270.6" width="20.8" height="20.8" fill="#FFFFFF" stroke="#EE4A0C" stroke-width="1.3"/><rect x="68.95" y="271.95" width="18.1" height="18.1" fill="none" stroke="#FFEA9C" stroke-width="1.1"/><rect x="90.6" y="270.6" width="20.8" height="20.8" fill="#FFFFFF" stroke="#EE4A0C" stroke-width="1.3"/><rect x="91.95" y="271.95" width="18.1" height="18.1" fill="none" stroke="#FFEA9C" stroke-width="1.1"/><rect x="113.6" y="270.6" width="20.8" height="20.8" fill="#FFFFFF" stroke="#EE4A0C" stroke-width="1.3"/><rect x="114.95" y="271.95" width="18.1" height="18.1" fill="none" stroke="#FFEA9C" stroke-width="1.1"/><rect x="136.6" y="270.6" width="20.8" height="20.8" fill="#FFFFFF" stroke="#EE4A0C" stroke-width="1.3"/><rect x="137.95" y="271.95" width="18.1" height="18.1" fill="none" stroke="#FFEA9C" stroke-width="1.1"/><rect x="159.6" y="270.6" width="20.8" height="20.8" fill="#FFFFFF" stroke="#EE4A0C" stroke-width="1.3"/><rect x="160.95" y="271.95" width="18.1" height="18.1" fill="none" stroke="#FFEA9C" stroke-width="1.1"/><rect x="182.6" y="270.6" width="20.8" height="20.8" fill="#FFFFFF" stroke="#EE4A0C" stroke-width="1.3"/><rect x="183.95" y="271.95" width="18.1" height="18.1" fill="none" stroke="#FFEA9C" stroke-width="1.1"/><rect x="205.6" y="270.6" width="20.8" height="20.8" fill="#FFFFFF" stroke="#EE4A0C" stroke-width="1.3"/><rect x="206.95" y="271.95" width="18.1" height="18.1" fill="none" stroke="#FFEA9C" stroke-width="1.1"/><rect x="228.6" y="270.6" width="20.8" height="20.8" fill="#FFFFFF" stroke="#EE4A0C" stroke-width="1.3"/><rect x="229.95" y="271.95" width="18.1" height="18.1" fill="none" stroke="#FFEA9C" stroke-width="1.1"/><rect x="252.5" y="271.5" width="19" height="19" fill="#FFFFFF" stroke="#6E6E6E" stroke-width="1.1"/><rect x="275.5" y="271.5" width="19" height="19" fill="#FFFFFF" stroke="#6E6E6E" stroke-width="1.1"/><rect x="67.6" y="293.6" width="20.8" height="20.8" fill="#FFFFFF" stroke="#EE4A0C" stroke-width="1.3"/><rect x="68.95" y="294.95" width="18.1" height="18.1" fill="none" stroke="#FFEA9C" stroke-width="1.1"/><rect x="90.6" y="293.6" width="20.8" height="20.8" fill="#FFFFFF" stroke="#EE4A0C" stroke-width="1.3"/><rect x="91.95" y="294.95" width="18.1" height="18.1" fill="none" stroke="#FFEA9C" stroke-width="1.1"/><rect x="113.6" y="293.6" width="20.8" height="20.8" fill="#FFFFFF" stroke="#EE4A0C" stroke-width="1.3"/><rect x="114.95" y="294.95" width="18.1" height="18.1" fill="none" stroke="#FFEA9C" stroke-width="1.1"/><rect x="136.6" y="293.6" width="20.8" height="20.8" fill="#FFFFFF" stroke="#EE4A0C" stroke-width="1.3"/><rect x="137.95" y="294.95" width="18.1" height="18.1" fill="none" stroke="#FFEA9C" stroke-width="1.1"/><rect x="159.6" y="293.6" width="20.8" height="20.8" fill="#FFFFFF" stroke="#EE4A0C" stroke-width="1.3"/><rect x="160.95" y="294.95" width="18.1" height="18.1" fill="none" stroke="#FFEA9C" stroke-width="1.1"/><rect x="182.6" y="293.6" width="20.8" height="20.8" fill="#FFFFFF" stroke="#EE4A0C" stroke-width="1.3"/><rect x="183.95" y="294.95" width="18.1" height="18.1" fill="none" stroke="#FFEA9C" stroke-width="1.1"/><rect x="205.6" y="293.6" width="20.8" height="20.8" fill="#FFFFFF" stroke="#EE4A0C" stroke-width="1.3"/><rect x="206.95" y="294.95" width="18.1" height="18.1" fill="none" stroke="#FFEA9C" stroke-width="1.1"/><rect x="228.6" y="293.6" width="20.8" height="20.8" fill="#FFFFFF" stroke="#EE4A0C" stroke-width="1.3"/><rect x="229.95" y="294.95" width="18.1" height="18.1" fill="none" stroke="#FFEA9C" stroke-width="1.1"/><rect x="252.5" y="294.5" width="19" height="19" fill="#FFFFFF" stroke="#6E6E6E" stroke-width="1.1"/><rect x="275.5" y="294.5" width="19" height="19" fill="#FFFFFF" stroke="#6E6E6E" stroke-width="1.1"/><rect x="68.5" y="317.5" width="19" height="19" fill="#FFFFFF" stroke="#6E6E6E" stroke-width="1.1"/><rect x="91.5" y="317.5" width="19" height="19" fill="#FFFFFF" stroke="#6E6E6E" stroke-width="1.1"/><rect x="114.5" y="317.5" width="19" height="19" fill="#FFFFFF" stroke="#6E6E6E" stroke-width="1.1"/><rect x="137.5" y="317.5" width="19" height="19" fill="#FFFFFF" stroke="#6E6E6E" stroke-width="1.1"/><rect x="160.5" y="317.5" width="19" height="19" fill="#FFFFFF" stroke="#6E6E6E" stroke-width="1.1"/><rect x="183.5" y="317.5" width="19" height="19" fill="#FFFFFF" stroke="#6E6E6E" stroke-width="1.1"/><rect x="206.5" y="317.5" width="19" height="19" fill="#FFFFFF" stroke="#6E6E6E" stroke-width="1.1"/><rect x="229.5" y="317.5" width="19" height="19" fill="#FFFFFF" stroke="#6E6E6E" stroke-width="1.1"/><rect x="252.5" y="317.5" width="19" height="19" fill="#FFFFFF" stroke="#6E6E6E" stroke-width="1.1"/><rect x="275.5" y="317.5" width="19" height="19" fill="#FFFFFF" stroke="#6E6E6E" stroke-width="1.1"/><rect x="68.5" y="340.5" width="19" height="19" fill="#FFFFFF" stroke="#6E6E6E" stroke-width="1.1"/><rect x="91.5" y="340.5" width="19" height="19" fill="#FFFFFF" stroke="#6E6E6E" stroke-width="1.1"/><rect x="114.5" y="340.5" width="19" height="19" fill="#FFFFFF" stroke="#6E6E6E" stroke-width="1.1"/><rect x="137.5" y="340.5" width="19" height="19" fill="#FFFFFF" stroke="#6E6E6E" stroke-width="1.1"/><rect x="160.5" y="340.5" width="19" height="19" fill="#FFFFFF" stroke="#6E6E6E" stroke-width="1.1"/><rect x="183.5" y="340.5" width="19" height="19" fill="#FFFFFF" stroke="#6E6E6E" stroke-width="1.1"/><rect x="206.5" y="340.5" width="19" height="19" fill="#FFFFFF" stroke="#6E6E6E" stroke-width="1.1"/><rect x="229.5" y="340.5" width="19" height="19" fill="#FFFFFF" stroke="#6E6E6E" stroke-width="1.1"/><rect x="252.5" y="340.5" width="19" height="19" fill="#FFFFFF" stroke="#6E6E6E" stroke-width="1.1"/><rect x="275.5" y="340.5" width="19" height="19" fill="#FFFFFF" stroke="#6E6E6E" stroke-width="1.1"/><rect x="68.5" y="363.5" width="19" height="19" fill="#FFFFFF" stroke="#6E6E6E" stroke-width="1.1"/><rect x="91.5" y="363.5" width="19" height="19" fill="#FFFFFF" stroke="#6E6E6E" stroke-width="1.1"/><rect x="114.5" y="363.5" width="19" height="19" fill="#FFFFFF" stroke="#6E6E6E" stroke-width="1.1"/><rect x="137.5" y="363.5" width="19" height="19" fill="#FFFFFF" stroke="#6E6E6E" stroke-width="1.1"/><rect x="160.5" y="363.5" width="19" height="19" fill="#FFFFFF" stroke="#6E6E6E" stroke-width="1.1"/><rect x="183.5" y="363.5" width="19" height="19" fill="#FFFFFF" stroke="#6E6E6E" stroke-width="1.1"/><rect x="206.5" y="363.5" width="19" height="19" fill="#FFFFFF" stroke="#6E6E6E" stroke-width="1.1"/><rect x="229.5" y="363.5" width="19" height="19" fill="#FFFFFF" stroke="#6E6E6E" stroke-width="1.1"/><rect x="252.5" y="363.5" width="19" height="19" fill="#FFFFFF" stroke="#6E6E6E" stroke-width="1.1"/><rect x="275.5" y="363.5" width="19" height="19" fill="#FFFFFF" stroke="#6E6E6E" stroke-width="1.1"/>
<rect x="64" y="387" width="234" height="1" fill="#E2E2E2"/>
<rect x="69.8" y="395.8" width="16.5" height="14.200000000000001" fill="#FFFFFF" stroke="#707070" stroke-width="1.2"/><rect x="69.2" y="395.2" width="17.7" height="3.5" fill="#707070"/><path d="M69.2 402.6 H86.9 M69.2 406.5 H86.9 M75.3 398.2 V410.59999999999997 M80.5 398.2 V410.59999999999997 " stroke="#8C8C8C" stroke-width="1.1"/>
<rect x="69.8" y="425.6" width="16.5" height="15.3" fill="#FFFFFF" stroke="#707070" stroke-width="1.2"/><rect x="69.2" y="425" width="17.7" height="3.5" fill="#707070"/><path d="M69.2 433.1 H86.9 M69.2 437 H86.9 M75.2 428 V441.5 M80.5 428 V441.5 " stroke="#8C8C8C" stroke-width="1.1"/>
<path d="M73.8 437.5 L86.8 424.5" stroke="#FFFFFF" stroke-width="5.5"/><path d="M74.3 436.6 L87.4 423.7" stroke="#3F78BE" stroke-width="3"/><path d="M74.3 436.6 L76 434.9" stroke="#A7C2E0" stroke-width="3"/>
<rect x="69.8" y="454.70000000000005" width="14.200000000000001" height="13.0" fill="#FFFFFF" stroke="#707070" stroke-width="1.2"/><rect x="69.2" y="454.1" width="15.4" height="3.5" fill="#707070"/><path d="M69.2 460.8 H84.60000000000001 M69.2 464.5 H84.60000000000001 M74.5 457.1 V468.3 M79.5 457.1 V468.3 " stroke="#8C8C8C" stroke-width="1.1"/>
<rect x="77.8" y="459.6" width="11.4" height="13.8" fill="#FFFFFF"/><path d="M80.5 460.6 H88.2 V472.4 H78.8 V462.3 Z" fill="#1D7044"/>
<path d="M80.7 463.2 L86.3 470.6 M86.3 463.2 L80.7 470.6" stroke="#FFFFFF" stroke-width="1.6"/>
<text x="100.76" y="410" font-size="15.5" fill="#505050" font-weight="400" textLength="87.16" lengthAdjust="spacingAndGlyphs" >Insert Table...</text>
<text x="101.02" y="439.6" font-size="15.5" fill="#505050" font-weight="400" textLength="76.19" lengthAdjust="spacingAndGlyphs" >Draw Table</text>
<text x="101.08" y="469.3" font-size="15.5" fill="#505050" font-weight="400" textLength="119.38" lengthAdjust="spacingAndGlyphs" >Excel Spreadsheet</text>
<path d="M101.5 411.5 H105.5 M101.5 441 H111.5 M109 471 H116" stroke="#505050" stroke-width="1"/>
</svg></body></html>
